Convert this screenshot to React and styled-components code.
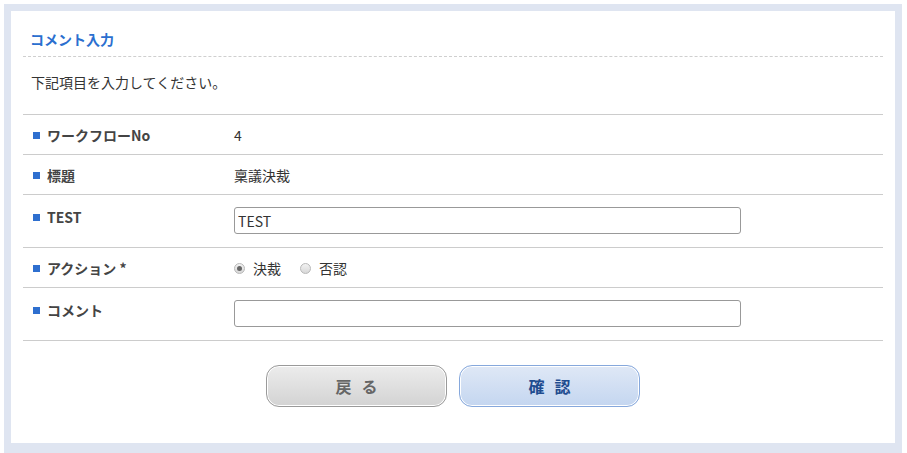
import React from 'react';
import styled, { createGlobalStyle } from 'styled-components';

const GlobalStyle = createGlobalStyle`
  html, body {
    margin: 0;
    padding: 0;
    background: #ffffff;
  }
  body {
    font-family: "Noto Sans CJK JP", "Liberation Sans", sans-serif;
    color: #333333;
  }
`;

const Frame = styled.div`
  margin: 4px 5px 0 4px;
  padding: 7px 7px 10px;
  background: #dfe5f1;
`;

const Panel = styled.section`
  background: #ffffff;
  padding: 12px 12px 12px;
`;

const Title = styled.h2`
  margin: 0;
  padding: 6px 7px 7px;
  font-size: 14px;
  line-height: 20px;
  font-weight: bold;
  color: #2b6fcf;
  border-bottom: 1px dashed #cfcfcf;
`;

const Lead = styled.p`
  margin: 0;
  padding: 15px 8px 22px;
  font-size: 14px;
  line-height: 20px;
  color: #333333;
  border-bottom: 1px solid #cccccc;
`;

const Row = styled.div`
  display: grid;
  grid-template-columns: 211px 507px;
  align-items: start;
  padding: ${p => (p.$field ? '12px 0 13px' : '10px 0 9px')};
  border-bottom: 1px solid #cccccc;
`;

const Label = styled.div`
  display: flex;
  align-items: center;
  gap: 7px;
  padding-left: 10px;
  font-size: 14px;
  line-height: 20px;
  font-weight: bold;
  color: #444444;

  &::before {
    content: "";
    display: block;
    flex: 0 0 7px;
    width: 7px;
    height: 7px;
    background: #2e6fcf;
  }
`;

const Value = styled.div`
  font-size: 14px;
  line-height: 20px;
  color: #333333;
`;

const TextInput = styled.input`
  box-sizing: border-box;
  width: 507px;
  height: 27px;
  padding: 0 3px;
  border: 1px solid #999999;
  border-radius: 3px;
  font-family: "Noto Sans CJK JP", "Liberation Sans", sans-serif;
  font-size: 14px;
  color: #333333;
  background: #ffffff;
  outline: none;
`;

const RadioGroup = styled.div`
  display: flex;
  align-items: center;
  gap: 19px;
`;

const RadioItem = styled.label`
  display: flex;
  align-items: center;
  gap: 8px;
  font-size: 14px;
  line-height: 20px;
  color: #333333;
`;

const RadioDot = styled.span`
  box-sizing: border-box;
  flex: 0 0 11px;
  width: 11px;
  height: 11px;
  border-radius: 50%;
  border: 1px solid #b8b8b8;
  background: linear-gradient(#f2f2f2, #d8d8d8);
  display: flex;
  align-items: center;
  justify-content: center;

  &::after {
    content: "";
    width: 5px;
    height: 5px;
    border-radius: 50%;
    background: ${p => (p.$checked ? '#666666' : 'transparent')};
  }
`;

const Buttons = styled.div`
  display: flex;
  justify-content: center;
  gap: 12px;
  padding: 24px 0 24px;
`;

const Button = styled.button`
  box-sizing: border-box;
  width: 181px;
  height: 42px;
  border-radius: 13px;
  font-family: "Noto Sans CJK JP", "Liberation Sans", sans-serif;
  font-size: 16px;
  font-weight: bold;
  letter-spacing: 10px;
  text-indent: 10px;
  cursor: pointer;
  border: 1px solid ${p => (p.$primary ? '#86a8dc' : '#9a9a9a')};
  color: ${p => (p.$primary ? '#1f4c8f' : '#666666')};
  background: ${p =>
    p.$primary
      ? 'linear-gradient(#dfe8f6, #c4d6f0)'
      : 'linear-gradient(#ececec, #d3d3d3)'};
  box-shadow: inset 0 0 0 1px #ffffff;
`;

export default function App() {
  return (
    <>
      <GlobalStyle />
      <Frame>
        <Panel>
          <Title>コメント入力</Title>
          <Lead>下記項目を入力してください。</Lead>
          <Row>
            <Label>ワークフローNo</Label>
            <Value>4</Value>
          </Row>
          <Row>
            <Label>標題</Label>
            <Value>稟議決裁</Value>
          </Row>
          <Row $field>
            <Label>TEST</Label>
            <TextInput defaultValue="TEST" />
          </Row>
          <Row>
            <Label>アクション *</Label>
            <RadioGroup>
              <RadioItem>
                <RadioDot $checked />
                決裁
              </RadioItem>
              <RadioItem>
                <RadioDot />
                否認
              </RadioItem>
            </RadioGroup>
          </Row>
          <Row $field>
            <Label>コメント</Label>
            <TextInput defaultValue="" />
          </Row>
          <Buttons>
            <Button>戻る</Button>
            <Button $primary>確認</Button>
          </Buttons>
        </Panel>
      </Frame>
    </>
  );
}
